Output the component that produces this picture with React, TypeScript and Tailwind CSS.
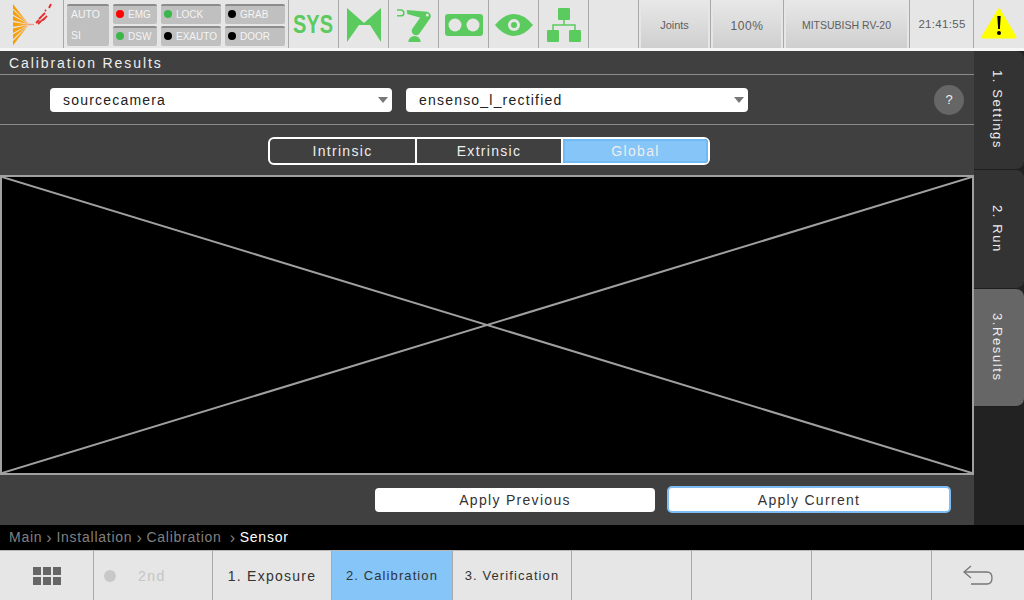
import React from "react";

const FONT = "font-['Liberation_Sans',Arial,sans-serif]";
const GREEN = "#5bcb5f";

function Logo() {
  const rays = [4, 10, 16, 22.3, 28.5, 34.5, 41];
  const specks = [
    "M36 23 L39 20", "M38 24 L41 21", "M39 19 L42 16", "M41 21 L44 19", "M42 16 L45 13",
    "M43 20 L46 17", "M45 11 L46 10", "M46 17 L47 16", "M49 8 L51 4",
  ];
  return (
    <svg width="63" height="48" viewBox="0 0 63 48">
      <defs>
        <linearGradient id="fan" x1="0" y1="0" x2="1" y2="0">
          <stop offset="0" stopColor="#f59c00" />
          <stop offset="0.65" stopColor="#f8a92a" />
          <stop offset="1" stopColor="#f7b08a" />
        </linearGradient>
      </defs>
      {rays.map((y) => (
        <polygon key={y} points={`13,${y} 13,${y + 4.5} 29,24.5`} fill="url(#fan)" />
      ))}
      <path d="M28 24.5 H34" stroke="#f29a86" strokeWidth="1.4" />
      {specks.map((d) => (
        <path key={d} d={d} stroke="#e22a2a" strokeWidth="1.8" />
      ))}
    </svg>
  );
}

function StatusCell({ dot, label }: { dot: string; label: string }) {
  return (
    <div className="flex h-5 items-center gap-1 rounded-[2px] border-t-2 border-[#8c8c8c] bg-[#c0c0c0] pb-[2px] pl-[3px] text-[10px] text-[#f4f4f4]">
      <span className="h-2 w-2 shrink-0 rounded-full" style={{ background: dot }} />
      <span>{label}</span>
    </div>
  );
}

function IconCell({ children }: { children: React.ReactNode }) {
  return <div className="flex h-full w-[50px] items-center justify-start overflow-hidden border-r border-[#a8a8a8]">{children}</div>;
}

function TopBar() {
  return (
    <div className={`flex h-[51px] border-b-[3px] border-[#f6f6f6] bg-[#e6e6e6] ${FONT}`}>
      <div className="h-full w-[64px] overflow-hidden border-r border-[#a8a8a8]">
        <Logo />
      </div>
      <div className="flex h-full w-[225px] gap-1 border-r border-[#a8a8a8] pl-[3px] pt-1">
        <div className="flex h-[42px] w-[42px] flex-col justify-between rounded-[2px] border-t-2 border-[#8c8c8c] bg-[#c0c0c0] px-[4px] pb-[2px] pt-[1px] text-[10.5px] text-[#f4f4f4]">
          <span>AUTO</span>
          <span>SI</span>
        </div>
        <div className="flex w-11 flex-col gap-[2px]">
          <StatusCell dot="#ff0000" label="EMG" />
          <StatusCell dot="#3cb54a" label="DSW" />
        </div>
        <div className="flex w-[60px] flex-col gap-[2px]">
          <StatusCell dot="#3cb54a" label="LOCK" />
          <StatusCell dot="#000000" label="EXAUTO" />
        </div>
        <div className="flex w-[60px] flex-col gap-[2px]">
          <StatusCell dot="#000000" label="GRAB" />
          <StatusCell dot="#000000" label="DOOR" />
        </div>
      </div>
      <div className="flex h-full w-[50px] items-center justify-center border-r border-[#a8a8a8] pt-[2px]">
        <span className="inline-block scale-x-[0.8] text-[25px] font-bold text-[#5bcb5f]">SYS</span>
      </div>
      <IconCell>
        <svg className="shrink-0" width="50" height="48" viewBox="1 0 50 48">
          <polygon points="9,8 26,23 43,8 43,42 32,25 21,25 9,42" fill={GREEN} />
        </svg>
      </IconCell>
      <IconCell>
        <svg className="shrink-0" width="50" height="48" viewBox="1 0 50 48">
          <path d="M9 10 h4 a2.9 2.9 0 0 1 0 5.8 h-4" fill="none" stroke={GREEN} strokeWidth="1.6" />
          <polygon points="18.7,10 38.7,11.7 37,19 19.3,14" fill={GREEN} />
          <path d="M38.5 16 L28 31" stroke={GREEN} strokeWidth="8.6" strokeLinecap="round" />
          <circle cx="39.3" cy="15" r="1.5" fill="#e6e6e6" />
          <path d="M20.3 42 a6.2 6 0 0 1 12.4 0 z" fill={GREEN} />
        </svg>
      </IconCell>
      <IconCell>
        <svg className="shrink-0" width="50" height="48" viewBox="1 0 50 48">
          <rect x="7" y="14" width="38" height="22" rx="3" fill={GREEN} />
          <circle cx="17" cy="25" r="6.5" fill="#e6e6e6" />
          <circle cx="35" cy="25" r="6.5" fill="#e6e6e6" />
        </svg>
      </IconCell>
      <IconCell>
        <svg className="shrink-0" width="50" height="48" viewBox="1 0 50 48">
          <path d="M7 25 Q16 14 26 14 Q36 14 45 25 Q36 36 26 36 Q16 36 7 25 Z" fill={GREEN} />
          <circle cx="26" cy="25" r="6" fill="#e6e6e6" />
          <circle cx="26" cy="25" r="3" fill={GREEN} />
        </svg>
      </IconCell>
      <IconCell>
        <svg className="shrink-0" width="50" height="48" viewBox="1 0 50 48">
          <rect x="20" y="8" width="12" height="12" rx="1" fill={GREEN} />
          <rect x="9" y="30" width="12" height="12" rx="1" fill={GREEN} />
          <rect x="31" y="30" width="12" height="12" rx="1" fill={GREEN} />
          <path d="M26 20 V25 M15 30 V25 H37 V30" fill="none" stroke={GREEN} strokeWidth="1.5" />
        </svg>
      </IconCell>
      <div className="h-full w-[50px] border-r border-[#a8a8a8]" />
      <div className="h-full w-[72px] border-r border-[#a8a8a8] px-[2px]">
        <div className="flex h-full items-center justify-center bg-gradient-to-b from-[#e8e8e8] to-[#cfcfcf] pt-[2px] text-[11px] text-[#5e5e5e]">Joints</div>
      </div>
      <div className="h-full w-[73px] border-r border-[#a8a8a8] px-[2px]">
        <div className="flex h-full items-center justify-center bg-gradient-to-b from-[#e8e8e8] to-[#cfcfcf] pt-[3px] text-[12px] tracking-[0.6px] text-[#5e5e5e]">100%</div>
      </div>
      <div className="h-full w-[126px] border-r border-[#a8a8a8] px-[2px]">
        <div className="flex h-full items-center justify-center bg-gradient-to-b from-[#e8e8e8] to-[#cfcfcf] pt-[3px] text-[10.5px] text-[#5e5e5e]">MITSUBISH RV-20</div>
      </div>
      <div className="flex h-full w-16 items-center justify-center border-r border-[#a8a8a8] pl-[1px] pt-[2px] text-[11.5px] tracking-[0.3px] text-[#5e5e5e]">21:41:55</div>
      <div className="flex h-full flex-1 items-center justify-center">
        <svg width="36" height="34" viewBox="0 0 36 34">
          <path d="M18 3 L34 30 H2 Z" fill="#ffff00" stroke="#ffff00" strokeWidth="3" strokeLinejoin="round" />
          <path d="M16.3 9 h3.4 l-0.8 13 h-1.8 Z" fill="#000" />
          <circle cx="18" cy="26" r="2" fill="#000" />
        </svg>
      </div>
    </div>
  );
}

function SelectBox({ value }: { value: string }) {
  return (
    <div className="flex h-6 w-[342px] items-center justify-between rounded-[4px] bg-white pl-[13px] pr-1 text-[14px] tracking-[1.2px] text-[#222]">
      <span className="pt-[1px]">{value}</span>
      <span className="h-0 w-0 border-x-[5px] border-t-[6px] border-x-transparent border-t-[#777]" />
    </div>
  );
}

function SideTab({ label, active, h }: { label: string; active?: boolean; h: string }) {
  return (
    <div
      className={`${h} flex items-center justify-center rounded-br-[8px] rounded-tr-[8px] border-b border-[#1e1e1e] pr-[4px] text-[13px] tracking-[1.6px] text-[#eee] [writing-mode:vertical-rl] ${
        active ? "bg-[#666666]" : "bg-[#333333]"
      }`}
    >
      {label}
    </div>
  );
}

function Main() {
  return (
    <div className={`flex h-[475px] ${FONT}`}>
      <div className="flex w-[974px] flex-col bg-[#404040]">
        <div className="flex h-[24px] items-center border-b border-[#8a8a8a] pl-[9px] pt-[1px] text-[14px] tracking-[1.9px] text-[#eeeeee]">Calibration Results</div>
        <div className="flex h-[50px] items-center gap-[14px] border-b border-[#8a8a8a] pl-[50px] pr-[10px]">
          <SelectBox value="sourcecamera" />
          <SelectBox value="ensenso_l_rectified" />
          <div className="ml-auto flex h-[30px] w-[30px] items-center justify-center rounded-full bg-[#666666] text-[13px] text-[#eee]">?</div>
        </div>
        <div className="flex h-[50px] justify-center pl-[4px] pt-3">
          <div className="flex h-7 w-[442px] rounded-[6px] border-2 border-white text-[14px] tracking-[1.3px] text-[#eeeeee]">
            <div className="flex w-[147px] items-center justify-center border-r-2 border-white">Intrinsic</div>
            <div className="flex w-[146px] items-center justify-center border-r-2 border-white">Extrinsic</div>
            <div className="flex flex-1 items-center justify-center rounded-r-[3px] border-2 border-[#6fb9f4] bg-[#85c5f8] pt-[1px]">Global</div>
          </div>
        </div>
        <div className="h-[300px] border-2 border-[#a0a0a0] bg-black">
          <svg className="block h-full w-full" viewBox="0 0 970 296" preserveAspectRatio="none">
            <line x1="0" y1="0" x2="970" y2="296" stroke="#a0a0a0" strokeWidth="2" />
            <line x1="970" y1="0" x2="0" y2="296" stroke="#a0a0a0" strokeWidth="2" />
          </svg>
        </div>
        <div className="flex flex-1 items-center pb-[1px] pl-[375px] text-[14px] tracking-[1.3px] text-[#333]">
          <div className="flex h-6 w-[280px] items-center justify-center rounded-[4px] bg-white pt-[1px]">Apply Previous</div>
          <div className="ml-3 flex h-[27px] w-[284px] items-center justify-center rounded-[5px] border-2 border-[#7dbdf3] bg-white pt-[1px]">Apply Current</div>
        </div>
      </div>
      <div className="flex w-[50px] flex-col bg-[#222222]">
        <SideTab label="1. Settings" h="h-[119px]" />
        <SideTab label="2. Run" h="h-[119px]" />
        <SideTab label="3.Results" active h="h-[118px]" />
      </div>
    </div>
  );
}

function Crumbs() {
  return (
    <div className={`flex h-[25px] items-center bg-black pl-[9px] text-[14px] tracking-[0.75px] text-[#808080] ${FONT}`}>
      <span>Main</span>
      <span className="mx-[4px] text-[16px]">›</span>
      <span>Installation</span>
      <span className="mx-[4px] text-[16px]">›</span>
      <span>Calibration</span>
      <span className="ml-[8px] mr-[4px] text-[16px]">›</span>
      <span className="text-white">Sensor</span>
    </div>
  );
}

function BottomCell({ w, children, active, tone }: { w: string; children?: React.ReactNode; active?: boolean; tone?: string }) {
  return (
    <div
      className={`${w} flex h-full items-center justify-center border-r border-[#a8a8a8] pt-[1px] text-[#333] ${tone ?? "text-[13px] tracking-[1.1px]"} ${
        active ? "bg-[#85c5f8]" : ""
      }`}
    >
      {children}
    </div>
  );
}

function BottomBar() {
  return (
    <div className={`flex h-[50px] border-t border-[#b8b8b8] bg-[#e6e6e6] ${FONT}`}>
      <BottomCell w="w-[94px]">
        <div className="grid grid-cols-3 gap-[2px]">
          {[0, 1, 2, 3, 4, 5].map((i) => (
            <span key={i} className="h-2 w-2 bg-[#666666]" />
          ))}
        </div>
      </BottomCell>
      <div className="flex h-full w-[119px] items-center border-r border-[#a8a8a8] pl-[10px] pt-[1px] text-[14px] tracking-[1.5px] text-[#c4c4c4]">
        <span className="h-3 w-3 rounded-full bg-[#c8c8c8]" />
        <span className="ml-[22px]">2nd</span>
      </div>
      <BottomCell w="w-[119px]" tone="text-[14px] tracking-[1.25px]">1. Exposure</BottomCell>
      <BottomCell w="w-[121px]" active>2. Calibration</BottomCell>
      <BottomCell w="w-[119px]">3. Verification</BottomCell>
      <BottomCell w="w-[120px]" />
      <BottomCell w="w-[120px]" />
      <BottomCell w="w-[120px]" />
      <div className="flex h-full flex-1 items-center justify-center">
        <svg width="32" height="24" viewBox="0 0 32 24" fill="none" stroke="#777" strokeWidth="1.3">
          <path d="M9 2 L2 8 L9 14" />
          <path d="M2 8 H25 Q30 8 30 14 Q30 20 25 20 H9" />
        </svg>
      </div>
    </div>
  );
}

export default function App() {
  return (
    <div className="flex h-[600px] w-[1024px] flex-col overflow-hidden bg-black">
      <TopBar />
      <Main />
      <Crumbs />
      <BottomBar />
    </div>
  );
}
